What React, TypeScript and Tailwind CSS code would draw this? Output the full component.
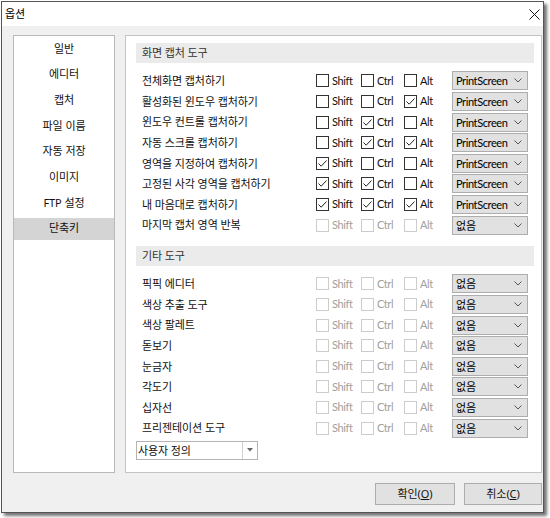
import React from 'react';

type Row = {
  label: string;
  shift: boolean;
  ctrl: boolean;
  alt: boolean;
  key: string;
  disabled?: boolean;
};

const captureRows: Row[] = [
  { label: '전체화면 캡처하기', shift: false, ctrl: false, alt: false, key: 'PrintScreen' },
  { label: '활성화된 윈도우 캡처하기', shift: false, ctrl: false, alt: true, key: 'PrintScreen' },
  { label: '윈도우 컨트롤 캡처하기', shift: false, ctrl: true, alt: false, key: 'PrintScreen' },
  { label: '자동 스크롤 캡처하기', shift: false, ctrl: true, alt: true, key: 'PrintScreen' },
  { label: '영역을 지정하여 캡처하기', shift: true, ctrl: false, alt: false, key: 'PrintScreen' },
  { label: '고정된 사각 영역을 캡처하기', shift: true, ctrl: true, alt: false, key: 'PrintScreen' },
  { label: '내 마음대로 캡처하기', shift: true, ctrl: true, alt: true, key: 'PrintScreen' },
  { label: '마지막 캡처 영역 반복', shift: false, ctrl: false, alt: false, key: '없음', disabled: true },
];

const toolRows: Row[] = [
  '픽픽 에디터',
  '색상 추출 도구',
  '색상 팔레트',
  '돋보기',
  '눈금자',
  '각도기',
  '십자선',
  '프리젠테이션 도구',
].map((label) => ({ label, shift: false, ctrl: false, alt: false, key: '없음', disabled: true }));

const menu = ['일반', '에디터', '캡처', '파일 이름', '자동 저장', '이미지', 'FTP 설정', '단축키'];

// latin bits (Shift / Ctrl / PrintScreen) are set a bit narrower than the korean labels
const latin = "font-['Lato','Noto_Sans','Noto_Sans_CJK_KR',sans-serif] text-[11px] tracking-[-0.4px]";

const Check = ({ checked, disabled, text, width }: { checked: boolean; disabled?: boolean; text: string; width: string }) => (
  <div className={`flex items-center ${width}`}>
    <div
      className={`w-[13px] h-[13px] bg-white border flex items-center justify-center ${
        disabled ? 'border-[#cccccc]' : 'border-[#333333]'
      }`}
    >
      {checked && (
        <svg width="11" height="11" viewBox="0 0 11 11">
          <path d="M1.5 5.5 L4.2 8.2 L9.5 2.5" fill="none" stroke="#222" strokeWidth="1" />
        </svg>
      )}
    </div>
    <span className={`ml-[3px] ${latin} ${disabled ? 'text-[#a0a0a0]' : 'text-[#111]'}`}>{text}</span>
  </div>
);

const Select = ({ value }: { value: string }) => (
  <div className="w-[76px] h-[19px] bg-[#e1e1e1] border border-[#adadad] flex items-center justify-between pl-[3px] pr-[5px]">
    <span className={`text-black leading-none ${value === 'PrintScreen' ? latin : ''}`}>{value}</span>
    <svg width="8" height="5" viewBox="0 0 8 5">
      <path d="M0.5 0.5 L4 4 L7.5 0.5" fill="none" stroke="#555" strokeWidth="1" />
    </svg>
  </div>
);

const ShortcutRow = ({ row }: { row: Row }) => (
  <div className="flex items-center h-[20.6px]">
    <div className="w-[180px] pl-[6px] pt-[1px] text-[#111]">{row.label}</div>
    <Check checked={row.shift} disabled={row.disabled} text="Shift" width="w-[45px]" />
    <Check checked={row.ctrl} disabled={row.disabled} text="Ctrl" width="w-[43px]" />
    <Check checked={row.alt} disabled={row.disabled} text="Alt" width="w-[48px]" />
    <Select value={row.key} />
  </div>
);

const SectionHeader = ({ title }: { title: string }) => (
  <div className="h-[20px] bg-[#ebebeb] flex items-center pl-[6px] text-[#333]">{title}</div>
);

export default function App() {
  return (
    <div className="w-[550px] h-[518px] bg-white pt-[1px] pl-[1px] text-[11px] tracking-[-0.1px] font-['Noto_Sans','Noto_Sans_CJK_KR',sans-serif]">
      <div className="w-[543px] h-[512px] border border-[#555555] bg-[#f0f0f0] flex flex-col shadow-[3px_3px_3px_rgba(0,0,0,0.55)]">
        {/* title bar */}
        <div className="h-[24px] bg-white flex items-center justify-between pl-[3px] pr-[3px]">
          <span className="text-black">옵션</span>
          <svg width="11" height="11" viewBox="0 0 11 11">
            <path d="M0.5 0.5 L10.5 10.5 M10.5 0.5 L0.5 10.5" stroke="#111" strokeWidth="1" />
          </svg>
        </div>

        <div className="flex flex-col pl-[11px] pr-[1px] pt-[9px]">
          <div className="flex gap-[10px] h-[438px]">
            {/* left menu */}
            <div className="w-[102px] bg-white border border-[#b9b9b9] flex flex-col">
              {menu.map((m, i) => (
                <div key={m} className="h-[25.7px] flex items-center">
                  <div
                    className={`h-[22px] w-full flex items-center justify-center text-[#111] ${
                      i === menu.length - 1 ? 'bg-[#d4d4d4]' : ''
                    }`}
                  >
                    {m}
                  </div>
                </div>
              ))}
            </div>

            {/* right panel */}
            <div className="flex-1 bg-white border border-[#c4c4c4] pl-[10px] pr-[7px] pt-[7px] flex flex-col">
              <SectionHeader title="화면 캡처 도구" />
              <div className="mt-[7.7px] flex flex-col">
                {captureRows.map((r) => (
                  <ShortcutRow key={r.label} row={r} />
                ))}
              </div>
              <div className="mt-[10.5px]">
                <SectionHeader title="기타 도구" />
              </div>
              <div className="mt-[7.7px] flex flex-col">
                {toolRows.map((r) => (
                  <ShortcutRow key={r.label} row={r} />
                ))}
              </div>
              <div className="mt-[2.5px] w-[122px] h-[19px] bg-white border border-[#b4b4b4] flex items-center">
                <span className="flex-1 pl-[1px] text-[#111] leading-none">사용자 정의</span>
                <div className="w-[15px] h-full border-l border-[#d0d0d0] flex items-center justify-center">
                  <svg width="6" height="4" viewBox="0 0 6 4">
                    <path d="M0 0 L6 0 L3 3.5 Z" fill="#666" />
                  </svg>
                </div>
              </div>
            </div>
          </div>

          {/* buttons */}
          <div className="flex justify-end gap-[9px] mt-[10px]">
            <button className="w-[80px] h-[22px] bg-[#e1e1e1] border border-[#adadad] text-[#111] flex items-center justify-center">
              확인(<span className="underline">O</span>)
            </button>
            <button className="w-[78px] h-[22px] bg-[#e1e1e1] border border-[#adadad] text-[#111] flex items-center justify-center">
              취소(<span className="underline">C</span>)
            </button>
          </div>
        </div>
      </div>
    </div>
  );
}
